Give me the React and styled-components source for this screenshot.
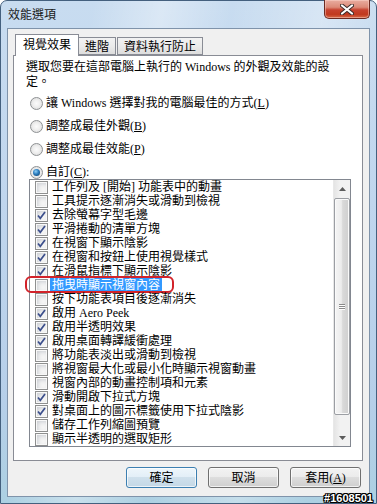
import styled, { createGlobalStyle } from "styled-components";

const GlobalStyle = createGlobalStyle`
  html, body { margin: 0; padding: 0; }
  body { width: 377px; height: 504px; overflow: hidden; background: #fff; }
  * { box-sizing: border-box; }
`;

const FONT = `"Liberation Serif", "Noto Sans CJK TC", serif`;

const effects = [
  { label: "工作列及 [開始] 功能表中的動畫", checked: false },
  { label: "工具提示逐漸消失或滑動到檢視", checked: false },
  { label: "去除螢幕字型毛邊", checked: true },
  { label: "平滑捲動的清單方塊", checked: true },
  { label: "在視窗下顯示陰影", checked: true },
  { label: "在視窗和按鈕上使用視覺樣式", checked: true },
  { label: "在滑鼠指標下顯示陰影", checked: true },
  { label: "拖曳時顯示視窗內容", checked: false, selected: true },
  { label: "按下功能表項目後逐漸消失", checked: false },
  { label: "啟用 Aero Peek", checked: true },
  { label: "啟用半透明效果", checked: true },
  { label: "啟用桌面轉譯緩衝處理", checked: true },
  { label: "將功能表淡出或滑動到檢視", checked: false },
  { label: "將視窗最大化或最小化時顯示視窗動畫", checked: false },
  { label: "視窗內部的動畫控制項和元素", checked: false },
  { label: "滑動開啟下拉式方塊", checked: true },
  { label: "對桌面上的圖示標籤使用下拉式陰影", checked: true },
  { label: "儲存工作列縮圖預覽", checked: false },
  { label: "顯示半透明的選取矩形", checked: false },
];

const radios = [
  { text: "讓 Windows 選擇對我的電腦最佳的方式", key: "L" },
  { text: "調整成最佳外觀", key: "B" },
  { text: "調整成最佳效能", key: "P" },
  { text: "自訂", key: "C", on: true, colon: true },
];

function App() {
  return (
    <>
      <GlobalStyle />
      <Window>
        <TitleBar>
          <Title>效能選項</Title>
          <CloseButton>
            <svg width="14" height="11" viewBox="0 0 14 11">
              <path d="M2 1.5 L12 9.5 M12 1.5 L2 9.5" stroke="#3a2a28" strokeWidth="4" strokeLinecap="round" />
              <path d="M2 1.5 L12 9.5 M12 1.5 L2 9.5" stroke="#fff" strokeWidth="2.2" strokeLinecap="round" />
            </svg>
          </CloseButton>
        </TitleBar>
        <Client>
          <TabStrip>
            <Tab $active>視覺效果</Tab>
            <Tab>進階</Tab>
            <Tab $gap>資料執行防止</Tab>
          </TabStrip>
          <Panel>
            <Intro>
              <IntroLine>選取您要在這部電腦上執行的 Windows 的外觀及效能的設</IntroLine>
              <IntroLine>定。</IntroLine>
            </Intro>
            <RadioGroup>
              {radios.map((r) => (
                <RadioRow key={r.key}>
                  <Radio $on={r.on} />
                  <span>
                    {r.text}(<u>{r.key}</u>){r.colon ? ":" : ""}
                  </span>
                </RadioRow>
              ))}
            </RadioGroup>
            <ListBox>
              <Rows>
                {effects.map((e) => (
                  <Row key={e.label}>
                    <CheckBox>
                      {e.checked && (
                        <svg width="11" height="11" viewBox="0 0 11 11">
                          <path d="M2 5.5 L4.3 8.3 L9 2" fill="none" stroke="#3c4f8c" strokeWidth="1.7" />
                        </svg>
                      )}
                    </CheckBox>
                    <Label $selected={e.selected}>{e.label}</Label>
                    {e.selected && <Annotation />}
                  </Row>
                ))}
              </Rows>
              <ScrollBar>
                <Arrow>
                  <svg width="7" height="4" viewBox="0 0 7 4">
                    <path d="M0 4 L3.5 0 L7 4 Z" fill="#5c5c5c" />
                  </svg>
                </Arrow>
                <Track>
                  <Thumb>
                    <Grip>
                      <i />
                      <i />
                      <i />
                    </Grip>
                  </Thumb>
                </Track>
                <Arrow>
                  <svg width="7" height="4" viewBox="0 0 7 4">
                    <path d="M0 0 L7 0 L3.5 4 Z" fill="#5c5c5c" />
                  </svg>
                </Arrow>
              </ScrollBar>
            </ListBox>
          </Panel>
          <ButtonRow>
            <Button $default>確定</Button>
            <Button>取消</Button>
            <Button>
              套用(<u>A</u>)
            </Button>
          </ButtonRow>
        </Client>
        <Watermark>#1608501</Watermark>
      </Window>
    </>
  );
}

export default App;

const Window = styled.div`
  position: relative;
  width: 377px;
  height: 504px;
  display: flex;
  flex-direction: column;
  padding: 0 6px 6px 6px;
  border: 1px solid #44607e;
  border-radius: 7px 7px 0 0;
  background: linear-gradient(
      100deg,
      rgba(255, 255, 255, 0) 20%,
      rgba(255, 255, 255, 0.35) 35%,
      rgba(255, 255, 255, 0) 50%,
      rgba(255, 255, 255, 0.3) 70%,
      rgba(255, 255, 255, 0) 85%
    ),
    linear-gradient(180deg, #c8dcf0 0%, #c0d6ee 40%, #b6cfe9 80%, #acd0e2 100%);
  font-family: ${FONT};
  font-size: 12px;
  color: #000;
`;

const TitleBar = styled.div`
  height: 27px;
  display: flex;
  align-items: flex-start;
  justify-content: space-between;
`;

const Title = styled.div`
  margin-top: 6px;
  padding-left: 1px;
  line-height: 16px;
  color: #1a1a1a;
`;

const CloseButton = styled.div`
  width: 46px;
  height: 19px;
  margin-top: -1px;
  border: 1px solid #6b2a22;
  border-top: none;
  border-radius: 0 0 5px 5px;
  display: flex;
  align-items: center;
  justify-content: center;
  background: linear-gradient(
    180deg,
    #e9ada0 0%,
    #dc8a78 40%,
    #c7422f 55%,
    #c1391f 80%,
    #d66a48 100%
  );
  box-shadow: inset 0 0 0 1px rgba(255, 220, 210, 0.45);
`;

const Client = styled.div`
  flex: 1;
  display: flex;
  flex-direction: column;
  padding: 5px 6px 7px 5px;
  background: #f0f0f0;
  border: 1px solid #7f93aa;
`;

const TabStrip = styled.div`
  height: 21px;
  display: flex;
  align-items: flex-end;
  padding-left: 2px;
  position: relative;
  z-index: 1;
`;

const Tab = styled.div`
  height: ${(p) => (p.$active ? "22px" : "18px")};
  margin-bottom: ${(p) => (p.$active ? "-1px" : "0")};
  margin-left: ${(p) => (p.$gap ? "1px" : "0")};
  padding: ${(p) => (p.$active ? "2px 7px 0" : "1px 6px 0")};
  line-height: 16px;
  border: 1px solid #898c95;
  border-bottom: ${(p) => (p.$active ? "none" : "1px solid #898c95")};
  ${(p) => (p.$active ? "" : "border-left: none;")}
  background: ${(p) =>
    p.$active ? "#ffffff" : "linear-gradient(180deg, #f2f2f2 0%, #ebebeb 50%, #dddddd 100%)"};
  white-space: nowrap;
  &:first-child {
    border-left: 1px solid #898c95;
  }
  &:nth-child(3) {
    border-left: 1px solid #898c95;
  }
`;

const Panel = styled.div`
  height: 406px;
  display: flex;
  flex-direction: column;
  padding: 4px 12px 0 12px;
  background: #ffffff;
  border: 1px solid #898c95;
`;

const Intro = styled.div`
  display: flex;
  flex-direction: column;
`;

const IntroLine = styled.div`
  height: 15px;
  line-height: 15px;
  white-space: nowrap;
`;

const RadioGroup = styled.div`
  margin-top: 7px;
  padding-left: 4px;
  display: flex;
  flex-direction: column;
  gap: 10px;
`;

const RadioRow = styled.div`
  height: 13px;
  display: flex;
  align-items: center;
  gap: 3px;
  line-height: 13px;
  white-space: nowrap;
`;

const Radio = styled.span`
  width: 13px;
  height: 13px;
  flex: none;
  border-radius: 50%;
  border: 1px solid #8e9193;
  background: radial-gradient(circle at 50% 50%, #fbfbfb 0%, #f0f0f0 40%, #d6d6d6 100%);
  display: flex;
  align-items: center;
  justify-content: center;
  &::after {
    content: "";
    display: ${(p) => (p.$on ? "block" : "none")};
    width: 7px;
    height: 7px;
    border-radius: 50%;
    background: radial-gradient(circle at 40% 35%, #8fd0f7 0%, #2a7bbd 45%, #0c3961 100%);
  }
`;

const ListBox = styled.div`
  margin-left: 3px;
  width: 322px;
  height: 268px;
  display: flex;
  border: 1px solid #828790;
  background: #fff;
`;

const Rows = styled.div`
  flex: 1;
  display: flex;
  flex-direction: column;
`;

const Row = styled.div`
  position: relative;
  height: 14px;
  display: flex;
  align-items: center;
  padding-left: 5px;
  gap: 4px;
  white-space: nowrap;
  line-height: 14px;
`;

const CheckBox = styled.span`
  width: 13px;
  height: 13px;
  flex: none;
  display: flex;
  align-items: center;
  justify-content: center;
  border: 1px solid #8e8f8f;
  background: #f4f4f4;
  box-shadow: inset 0 0 0 1px #f8f8f8, inset 2px 2px 4px #c9ccd1;
`;

const Label = styled.span`
  margin-left: ${(p) => (p.$selected ? "-2px" : "0")};
  padding: ${(p) => (p.$selected ? "0 2px" : "0")};
  background: ${(p) => (p.$selected ? "#3399ff" : "transparent")};
  color: ${(p) => (p.$selected ? "#fff" : "#000")};
`;

const Annotation = styled.span`
  position: absolute;
  left: -5px;
  top: -2px;
  width: 149px;
  height: 17px;
  border: 2px solid #d2232a;
  border-radius: 6px;
  pointer-events: none;
`;

const ScrollBar = styled.div`
  width: 17px;
  display: flex;
  flex-direction: column;
  background: linear-gradient(90deg, #e4e4e4 0%, #f2f2f2 40%, #f2f2f2 100%);
  border-left: 1px solid #e8e8e8;
`;

const Arrow = styled.div`
  height: 17px;
  display: flex;
  align-items: center;
  justify-content: center;
`;

const Track = styled.div`
  flex: 1;
`;

const Thumb = styled.div`
  margin: 1px 0 0 0;
  height: 217px;
  border: 1px solid #9b9ea3;
  border-radius: 2px;
  background: linear-gradient(90deg, #f5f5f5 0%, #ececec 45%, #d9d9d9 55%, #cfcfcf 100%);
  box-shadow: inset 0 0 0 1px #fafafa;
  display: flex;
  align-items: center;
  justify-content: center;
`;

const Grip = styled.div`
  display: flex;
  flex-direction: column;
  gap: 1px;
  i {
    display: block;
    width: 6px;
    height: 1px;
    background: #8a8a8a;
    box-shadow: 0 1px 0 #fff;
  }
`;

const ButtonRow = styled.div`
  margin-top: 6px;
  height: 22px;
  display: flex;
  justify-content: flex-end;
  gap: 11px;
  padding-right: 2px;
`;

const Button = styled.div`
  width: 71px;
  height: 21px;
  display: flex;
  align-items: center;
  justify-content: center;
  border: 1px solid ${(p) => (p.$default ? "#3c7fb1" : "#707070")};
  border-radius: 3px;
  background: ${(p) =>
    p.$default
      ? "linear-gradient(180deg, #eef6fb 0%, #e2eef7 50%, #cfe0ec 50%, #c4d8e6 100%)"
      : "linear-gradient(180deg, #f2f2f2 0%, #ebebeb 50%, #dddddd 50%, #cfcfcf 100%)"};
  box-shadow: inset 0 0 0 1px rgba(255, 255, 255, 0.7);
  line-height: 14px;
`;

const Watermark = styled.div`
  position: absolute;
  right: 3px;
  bottom: -1px;
  font-family: "Liberation Sans", sans-serif;
  font-weight: bold;
  font-size: 11px;
  line-height: 12px;
  color: #fff;
  text-shadow: 1px 0 0 #000, -1px 0 0 #000, 0 1px 0 #000, 0 -1px 0 #000,
    1px 1px 0 #000, -1px -1px 0 #000, 1px -1px 0 #000, -1px 1px 0 #000;
`;
